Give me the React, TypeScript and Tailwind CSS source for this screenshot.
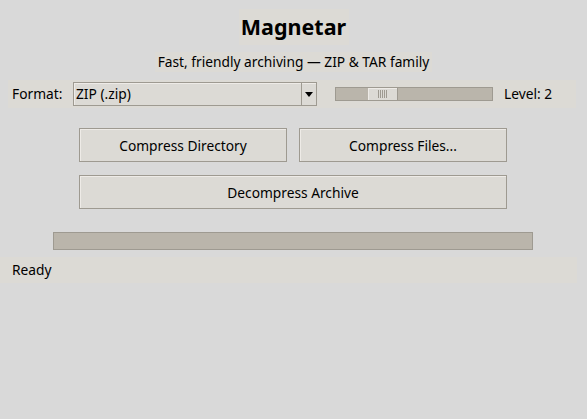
import React from 'react';

const Button = ({ label, wide = false }: { label: string; wide?: boolean }) => (
  <button
    className={`h-[34px] ${wide ? 'w-[428px]' : 'w-[208px]'} pt-[2px] bg-[#dcdad5] border border-[#9e9a91] shadow-[inset_1px_1px_0_#eeebe7] text-[13.75px] text-black flex items-center justify-center`}
  >
    {label}
  </button>
);

export default function App() {
  return (
    <div
      className="w-[587px] h-[419px] bg-[#d9d9d9] flex flex-col items-center text-black overflow-hidden"
      style={{ fontFamily: '"Noto Sans", "Open Sans", sans-serif' }}
    >
      {/* タイトル */}
      <div className="mt-[9px] h-[36px] w-[110px] bg-[#dcdad5] flex items-center justify-center">
        <span className="text-[21.5px] font-bold leading-none">Magnetar</span>
      </div>

      {/* サブタイトル */}
      <div className="mt-[7px] h-[20px] px-[3px] bg-[#dcdad5] flex items-center text-[13.75px] leading-none">
        Fast, friendly archiving — ZIP &amp; TAR family
      </div>

      {/* フォーマット行 */}
      <div className="mt-[8px] self-start ml-[8px] w-[568px] h-[28px] bg-[#dcdad5] flex items-center text-[13.75px]">
        <span className="ml-[4px] w-[61px]">Format:</span>
        <div className="w-[244px] h-[24px] bg-[#dcdad5] border border-[#9e9a91] shadow-[inset_1px_1px_0_#eeebe7] flex items-center">
          <span className="flex-1 pl-[2px]">ZIP (.zip)</span>
          <div className="w-[15px] h-full border-l border-[#9e9a91] flex items-center justify-center">
            <svg width="8" height="5" viewBox="0 0 8 5">
              <polygon points="0,0 8,0 4,5" fill="#000" />
            </svg>
          </div>
        </div>
        <div className="ml-[18px] w-[158px] h-[14px] bg-[#bab5ab] border border-[#9e9a91] flex items-center">
          <div className="ml-[32px] w-[30px] h-[12px] bg-[#dcdad5] border-r border-[#9e9a91] shadow-[inset_1px_1px_0_#eeebe7] flex items-center justify-center gap-[1px]">
            <div className="w-px h-[8px] bg-[#9e9a91]" />
            <div className="w-px h-[8px] bg-[#9e9a91]" />
            <div className="w-px h-[8px] bg-[#9e9a91]" />
            <div className="w-px h-[8px] bg-[#9e9a91]" />
            <div className="w-px h-[8px] bg-[#9e9a91]" />
          </div>
        </div>
        <span className="ml-[11px]">Level: 2</span>
      </div>

      {/* ボタン */}
      <div className="mt-[20px] self-start ml-[79px] flex flex-col gap-[13px]">
        <div className="flex gap-[12px]">
          <Button label="Compress Directory" />
          <Button label="Compress Files..." />
        </div>
        <Button label="Decompress Archive" wide />
      </div>

      {/* プログレスバー */}
      <div className="mt-[23px] self-start ml-[53px] w-[480px] h-[18px] bg-[#bab5ab] border border-[#9e9a91]" />

      {/* ステータス */}
      <div className="mt-[7px] self-start w-[577px] h-[26px] bg-[#dcdad5] flex items-center">
        <span className="ml-[12px] text-[13.75px]">Ready</span>
      </div>
    </div>
  );
}
